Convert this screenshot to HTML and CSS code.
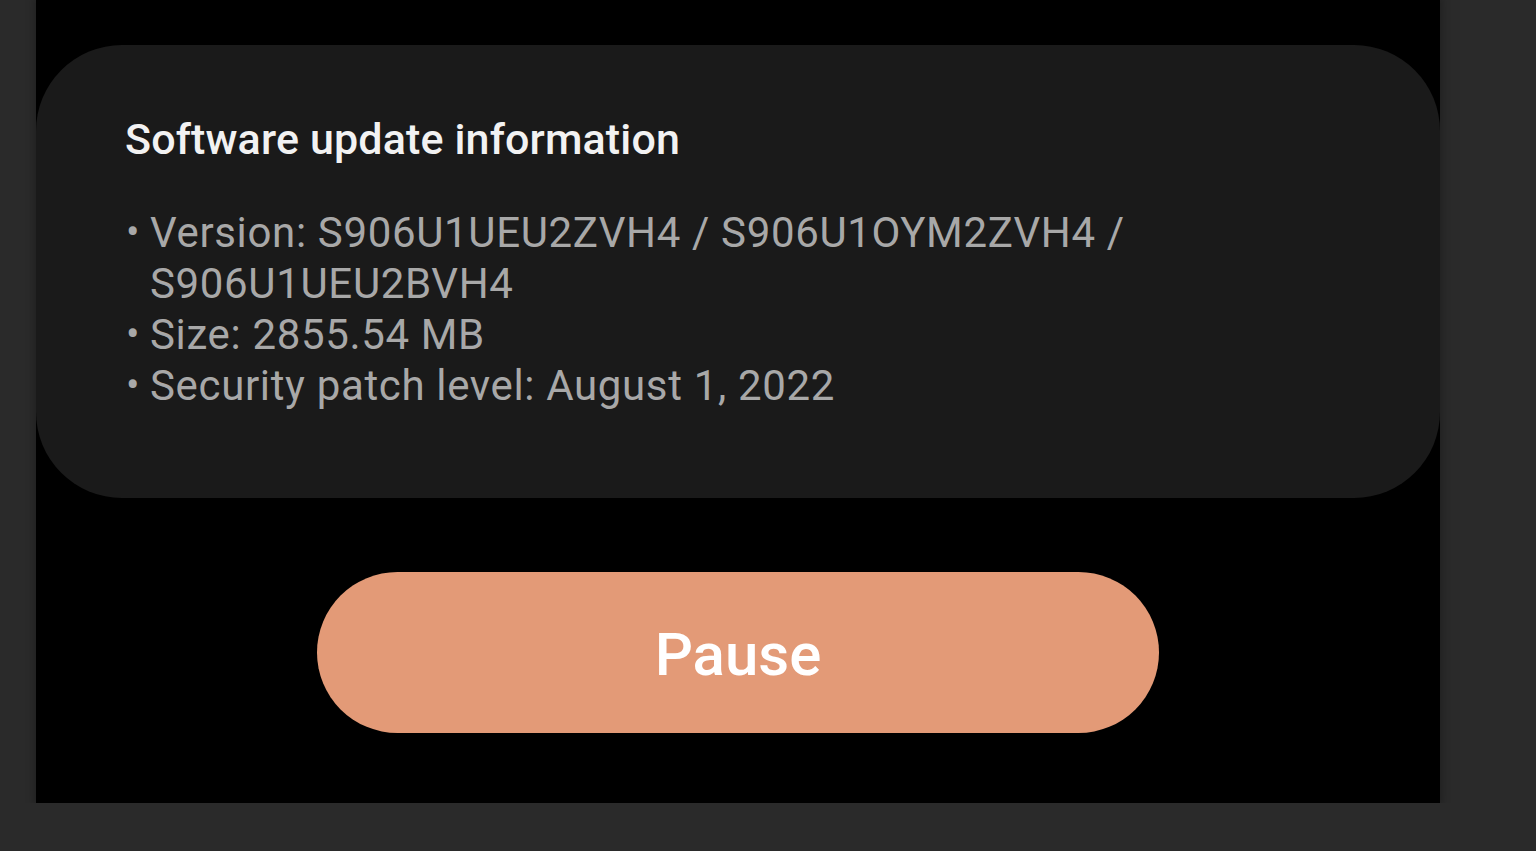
FILE: index.html
```html
<!DOCTYPE html>
<html lang="en">
<head>
  <meta charset="UTF-8">
  <meta name="viewport" content="width=device-width, initial-scale=1.0">
  <title>Software update</title>
  <link rel="stylesheet" href="styles.css">
</head>
<body>
  <div class="screen">
    <div class="info-card">
      <h2>Software update information</h2>
      <ul class="info-list">
        <li><span>Version: S906U1UEU2ZVH4 / S906U1OYM2ZVH4 / S906U1UEU2BVH4</span></li>
        <li><span>Size: 2855.54 MB</span></li>
        <li><span>Security patch level: August 1, 2022</span></li>
      </ul>
    </div>
    <div class="actions">
      <button type="button" class="pause-btn">Pause</button>
    </div>
  </div>
</body>
</html>
```

FILE: styles.css
```css
* {
  margin: 0px;
  padding: 0px;
  box-sizing: border-box;
}

body {
  background-color: #2a2a2a;
  font-family: Roboto, "Noto Sans", sans-serif;
  overflow: hidden;
}

.screen {
  width: 1404px;
  height: 803px;
  margin-left: 36px;
  background-color: #000;
  box-shadow: 0px 0px 8px 2px rgba(0, 0, 0, 0.25);
  padding-top: 45px;
}

.info-card {
  height: 453px;
  background-color: #1a1a1a;
  border-radius: 86px;
  padding: 69px 90px 0px 89px;
}

.info-card h2 {
  font-size: 43px;
  line-height: 50px;
  font-weight: 500;
  color: #f2f2f2;
  letter-spacing: 0.15px;
}

.info-list {
  list-style: none;
  margin-top: 43px;
  width: 1060px;
}

.info-list li {
  display: flex;
  font-size: 42px;
  line-height: 51px;
  color: #a8a8a8;
  letter-spacing: 0.65px;
}

.info-list li::before {
  content: "\2022";
  flex: 0 0 24px;
  font-size: 40px;
  padding-left: 1px;
}

.actions {
  display: flex;
  justify-content: center;
  padding-top: 74px;
}

.pause-btn {
  width: 842px;
  height: 161px;
  border: none;
  border-radius: 81px;
  background-color: #e39a77;
  color: #fff;
  font-family: Roboto, "Noto Sans", sans-serif;
  font-size: 60px;
  font-weight: 500;
  padding-top: 4px;
  cursor: pointer;
}
```
